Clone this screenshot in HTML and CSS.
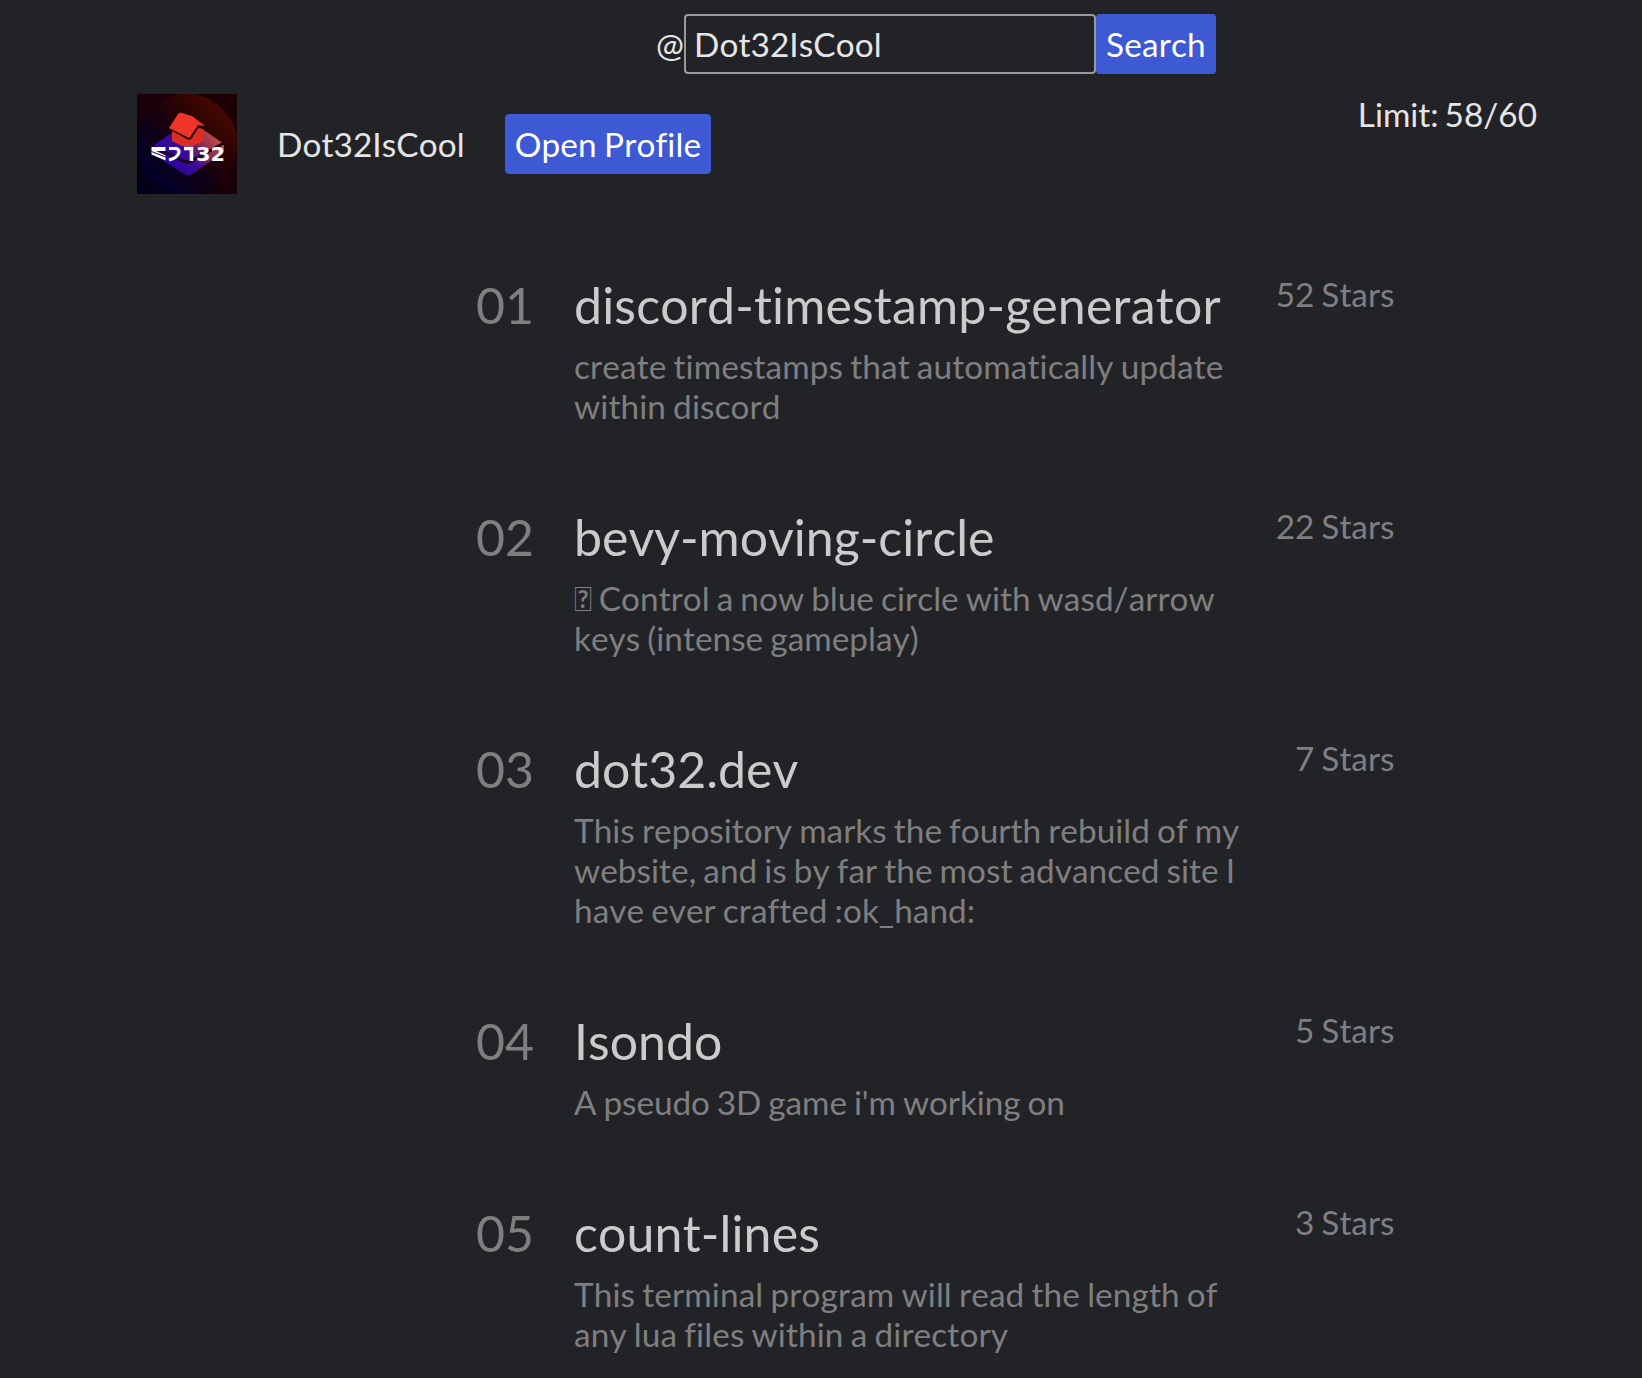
FILE: index.html
```html
<!DOCTYPE html>
<html lang="en">
<head>
<meta charset="utf-8">
<title>Repositories</title>
<link rel="stylesheet" href="styles.css">
</head>
<body>
<form class="search">
  <label class="at" for="user">@</label>
  <input class="field" id="user" type="text" value="Dot32IsCool" spellcheck="false">
  <button class="button" type="button">Search</button>
</form>
<header class="profile">
  <svg class="avatar" viewBox="0 0 100 100" aria-hidden="true">
    <defs>
      <linearGradient id="bg" x1="0" y1="1" x2="1" y2="0"><stop offset="0" stop-color="#00001c"/><stop offset=".3" stop-color="#08000f"/><stop offset=".5" stop-color="#1c000a"/><stop offset="1" stop-color="#1e0000"/></linearGradient>
      <linearGradient id="disc" x1="0" y1="1" x2="1" y2="0"><stop offset=".15" stop-color="#00002c"/><stop offset=".4" stop-color="#100016"/><stop offset=".6" stop-color="#240206"/><stop offset=".8" stop-color="#400800"/></linearGradient>
      <linearGradient id="slab" x1="0" y1=".8" x2="1" y2=".2"><stop offset="0" stop-color="#2000a4"/><stop offset=".45" stop-color="#3c0a98"/><stop offset=".65" stop-color="#802858"/><stop offset="1" stop-color="#dc5a38"/></linearGradient>
    </defs>
    <rect width="100" height="100" fill="url(#bg)"/>
    <circle cx="50" cy="50" r="50" fill="url(#disc)"/>
    <path d="M15 52 35 39 58 30 87 50V58L55 80Q51 82 47 80L15 59Z" fill="url(#slab)"/>
    <path d="M15 52 44 66Q50 70 56 66L87 49" fill="none" stroke="#160018" stroke-width="3"/>
    <path d="M35 37 66 31V47L56 52H45L35 47Z" fill="#dc2c23"/>
    <path d="M33 34 51 44Q53 45 55 41L61 32 68 34" fill="none" stroke="#220008" stroke-width="3"/>
    <path d="M41 20Q42 18 45 19L55 22 68 32 61 31 53 43Q52 45 50 43L32 34Z" fill="#ee3527"/>
    <path d="M14.500 53H28.500V57H19L28.500 61.500V66.500L14.500 60.500Z" fill="#fff"/>
    <path d="M14.500 57.500 28.500 63" stroke="#24004a" stroke-width="1"/>
    <path d="M32 54.500H38Q42 54.500 42 58 41 64 32 66" fill="none" stroke="#fff" stroke-width="3.200"/>
    <path d="M47 54.500H54.500V67" fill="none" stroke="#fff" stroke-width="3.600"/>
    <text class="mark" x="59" y="67" textLength="29" lengthAdjust="spacingAndGlyphs">32</text>
  </svg>
  <span class="name">Dot32IsCool</span>
  <button class="button" type="button">Open Profile</button>
  <span class="limit">Limit: 58/60</span>
</header>
<main class="repos">
  <article class="repo wide">
    <span class="rank">01</span>
    <div class="info"><h2 class="title">discord-timestamp-generator</h2><p class="desc">create timestamps that automatically update within discord</p></div>
    <span class="stars">52 Stars</span>
  </article>
  <article class="repo">
    <span class="rank">02</span>
    <div class="info"><h2 class="title">bevy-moving-circle</h2><p class="desc">&#x10F000; Control a now blue circle with wasd/arrow keys (intense gameplay)</p></div>
    <span class="stars">22 Stars</span>
  </article>
  <article class="repo">
    <span class="rank">03</span>
    <div class="info"><h2 class="title">dot32.dev</h2><p class="desc">This repository marks the fourth rebuild of my website, and is by far the most advanced site I have ever crafted :ok_hand:</p></div>
    <span class="stars">7 Stars</span>
  </article>
  <article class="repo tight">
    <span class="rank">04</span>
    <div class="info"><h2 class="title">Isondo</h2><p class="desc">A pseudo 3D game i'm working on</p></div>
    <span class="stars">5 Stars</span>
  </article>
  <article class="repo wide">
    <span class="rank">05</span>
    <div class="info"><h2 class="title">count-lines</h2><p class="desc">This terminal program will read the length of any lua files within a directory</p></div>
    <span class="stars">3 Stars</span>
  </article>
</main>
</body>
</html>
```
FILE: styles.css
```css
* { box-sizing: border-box; margin: 0; }
body {
  height: 1378px;
  padding-top: 14px;
  overflow: hidden;
  background: #222327;
  color: #e5e5e5;
  font: 33.333px/40px Lato, sans-serif;
  font-kerning: none;
  font-variant-ligatures: none;
}
.search { display: flex; align-items: center; padding-left: 656px; }
.at { width: 28px; }
.field {
  width: 412px;
  height: 60px;
  padding: 0 8px;
  border: 2px solid #999a99;
  border-radius: 4px;
  background: transparent;
  color: inherit;
  font: inherit;
  font-kerning: none;
  letter-spacing: .1px;
  outline: 0;
}
.button {
  height: 60px;
  padding: 10px;
  border: 0;
  border-radius: 4px;
  background: #3d59d3;
  color: #fff;
  font: inherit;
  font-kerning: none;
  font-variant-ligatures: none;
  letter-spacing: .15px;
  word-spacing: -1.500px;
  white-space: nowrap;
}
.profile {
  display: flex;
  align-items: center;
  gap: 40px;
  width: 1400px;
  margin: 20px 0 0 137px;
}
.avatar { width: 100px; height: 100px; }
.mark { fill: #fff; font: bold 19.500px "DejaVu Sans", sans-serif; }
.name { letter-spacing: .1px; }
.limit { margin-left: auto; align-self: flex-start; word-spacing: -2.500px; }
.repos {
  display: flex;
  flex-direction: column;
  gap: 82px;
  width: 918.500px;
  margin: 80px 0 0 476px;
  color: #7f7f7f;
  word-spacing: -1.500px;
}
.repo { display: grid; grid-template-columns: 98px 674px 1fr; }
.rank, .title { padding-top: 1px; font-size: 50px; line-height: 60px; font-weight: 400; }
.title { color: #cbcbcb; white-space: nowrap; }
.desc { margin-top: 11px; margin-bottom: -2px; letter-spacing: .03px; }
.wide .title { letter-spacing: .16px; }
.wide .desc { letter-spacing: .11px; }
.tight .desc { letter-spacing: -.07px; }
.stars { text-align: right; white-space: nowrap; }
```
